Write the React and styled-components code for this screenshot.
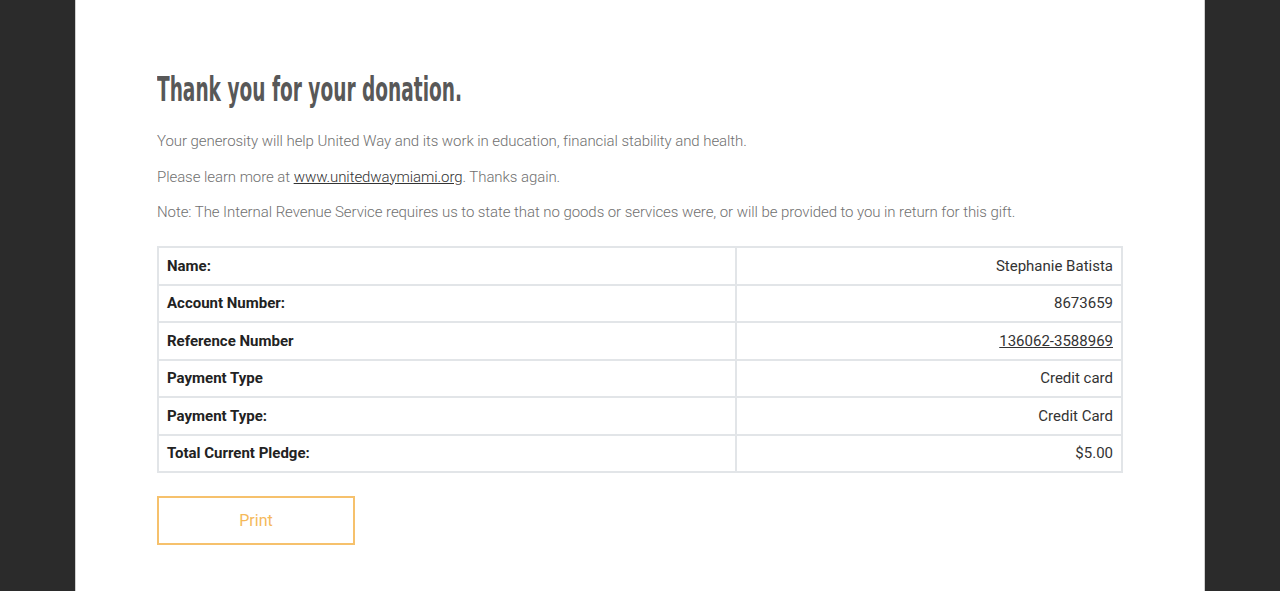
import styled, { createGlobalStyle } from "styled-components"

const GlobalStyle = createGlobalStyle`
    body {
        margin: 0;
        background-color: #2b2b2b;
        font-family: Roboto, "Liberation Sans", sans-serif;
    }
`

const ROWS = [
    { label: "Name:", value: "Stephanie Batista" },
    { label: "Account Number:", value: "8673659" },
    { label: "Reference Number", value: "136062-3588969", link: true },
    { label: "Payment Type", value: "Credit card" },
    { label: "Payment Type:", value: "Credit Card" },
    { label: "Total Current Pledge:", value: "$5.00" },
]

export default function App() {
    return (
        <>
            <GlobalStyle />
            <Page>
                <Content>
                    <Title>Thank you for your donation.</Title>
                    <Text>Your generosity will help United Way and its work in education, financial stability and health.</Text>
                    <Text>Please learn more at <TextLink href="#">www.unitedwaymiami.org</TextLink>. Thanks again.</Text>
                    <Text>Note: The Internal Revenue Service requires us to state that no goods or services were, or will be provided to you in return for this gift.</Text>
                    <Summary>
                        <tbody>
                            {ROWS.map((row, i) =>
                                <tr key={i}>
                                    <LabelCell>{row.label}</LabelCell>
                                    <ValueCell>
                                        {row.link ? <ValueLink href="#">{row.value}</ValueLink> : row.value}
                                    </ValueCell>
                                </tr>
                            )}
                        </tbody>
                    </Summary>
                    <PrintButton>Print</PrintButton>
                </Content>
            </Page>
        </>
    )
}

const Page = styled.div`
    margin: 0 75px;
    min-height: 591px;
    background-color: #ffffff;
    border-left: 1px solid #d0d0d0;
    border-right: 1px solid #d0d0d0;
`
const Content = styled.div`
    padding: 68px 81px 40px 81px;
`
// condensed face stands in for the narrow display font of the original
const Title = styled.h1`
    margin: 0 0 19px 0;
    font-family: "DejaVu Sans Condensed", "DejaVu Sans", sans-serif;
    font-stretch: condensed;
    font-weight: bold;
    font-size: 33px;
    line-height: 44px;
    color: #585858;
    transform: scaleX(0.625);
    transform-origin: left center;
    white-space: nowrap;
`
const Text = styled.p`
    margin: 0 0 14.5px 0;
    font-size: 15px;
    line-height: 21px;
    font-weight: 300;
    letter-spacing: -0.07px;
    color: #707070;
`
const TextLink = styled.a`
    color: #333333;
    text-decoration: underline;
`
const Summary = styled.table`
    width: 100%;
    margin-top: 23px;
    border-collapse: collapse;
    border: 2px solid #e2e5e8;
`
const LabelCell = styled.td`
    width: 60%;
    height: 35.5px;
    padding: 0 8px;
    border: 2px solid #e2e5e8;
    font-size: 15px;
    font-weight: bold;
    color: #222222;
`
const ValueCell = styled.td`
    height: 35.5px;
    padding: 0 8px;
    border: 2px solid #e2e5e8;
    text-align: right;
    font-size: 15px;
    color: #333333;
`
const ValueLink = styled.a`
    color: #333333;
    text-decoration: underline;
`
const PrintButton = styled.button`
    display: block;
    width: 198px;
    height: 49px;
    margin-top: 23px;
    background: #ffffff;
    border: 2px solid #f6c16c;
    font-family: Roboto, "Liberation Sans", sans-serif;
    font-size: 16px;
    color: #f5b95a;
    cursor: pointer;
`
